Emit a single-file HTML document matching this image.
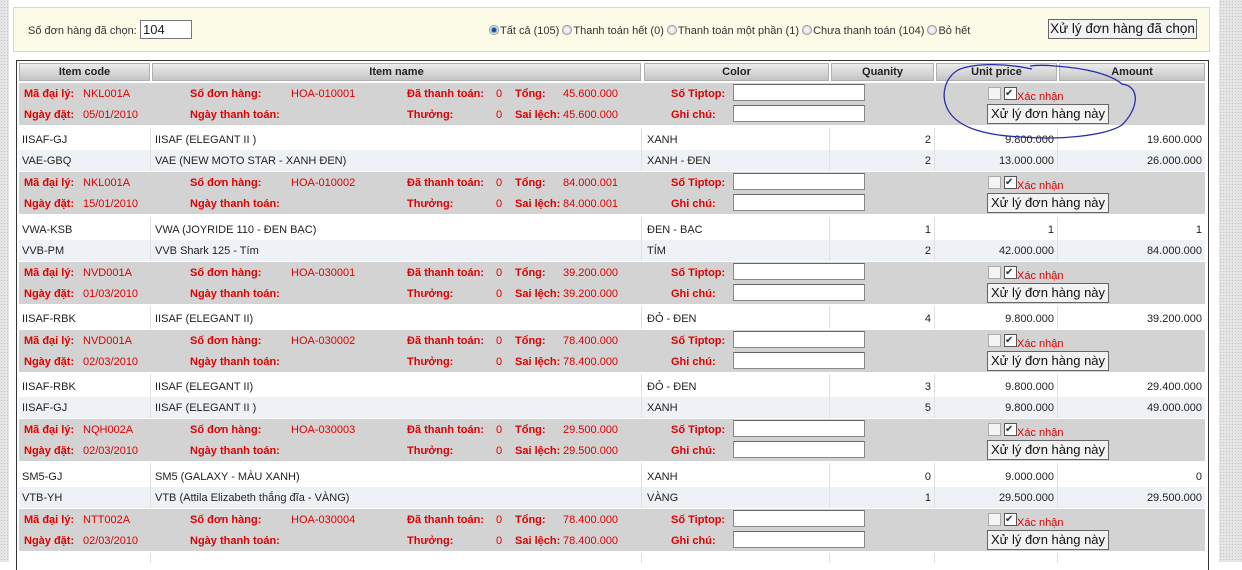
<!DOCTYPE html>
<html><head><meta charset="utf-8"><style>
*{box-sizing:border-box;margin:0;padding:0}
body{width:1242px;height:562px;overflow:hidden;background:#fff;font-family:"Liberation Sans",sans-serif;font-size:11px;color:#222;position:relative}
.a{position:absolute;white-space:nowrap;line-height:14px;margin-top:1px}
.strip{position:absolute;top:0;height:562px;background-color:#e6e6e6;background-image:radial-gradient(#c8c8c8 0.7px,transparent 0.8px);background-size:3px 3px}
.panel{position:absolute;left:13px;top:7px;width:1197px;height:45px;background:#fbfbe8;border:1px solid #d6dbc0}
.tbl{position:absolute;left:16px;top:60px;width:1193px;height:510px;border:1px solid #333;border-bottom:none}
.h{position:absolute;top:63px;height:18px;background:linear-gradient(#ececec,#c4c4c4);border:1px solid #b0b0b0;font-weight:bold;text-align:center;line-height:16px;color:#222}
.blk{position:absolute;left:19px;width:1186px;height:42px;background:#d3d3d3}
.alt{position:absolute;left:19px;width:1186px;height:21px;background:#eef2f6}
.r{color:#e00000}.b{font-weight:bold}
.in{position:absolute;width:132px;height:17px;background:#fff;border:1px solid #888;border-top-color:#666}
.cb{position:absolute;width:13px;height:13px;border:1px solid #aaa;background:#f4f4f4}
.btn{position:absolute;height:20px;border:1px solid #666;background:#f2f2f2;font-size:13px;line-height:18px;text-align:center;white-space:nowrap;color:#111;overflow:hidden}
.vl{position:absolute;width:1px;background:#e0e0e0}
.rad{display:inline-block;width:10px;height:10px;border-radius:50%;border:1px solid #999;background:radial-gradient(#fff,#ccc);vertical-align:-1px;margin-right:1px}
</style></head><body>
<div class="strip" style="left:0;width:9px"></div>
<div class="strip" style="left:1219px;width:23px"></div>
<div class="panel"></div>
<div class="a" style="left:28px;top:23px;color:#333">Số đơn hàng đã chọn:</div>
<div class="a" style="left:140px;top:19px;width:52px;height:19px;border:1px solid #777;background:#fff;font-size:13px;line-height:17px;padding-left:2px">104</div>
<div class="a" style="left:489px;top:23px;color:#333"><span class="rad" style="background:radial-gradient(#0a4a9a 30%,#7aa8d8 45%,#fff 70%)"></span>Tất cả (105) <span class="rad"></span>Thanh toán hết (0) <span class="rad"></span>Thanh toán một phần (1) <span class="rad"></span>Chưa thanh toán (104) <span class="rad"></span>Bỏ hết</div>
<div class="btn" style="left:1048px;top:19px;width:149px;font-size:13.5px">Xử lý đơn hàng đã chọn</div>
<div class="tbl"></div>
<div class="h" style="left:19px;width:131px">Item code</div>
<div class="h" style="left:152px;width:489px">Item name</div>
<div class="h" style="left:644px;width:185px">Color</div>
<div class="h" style="left:831px;width:103px">Quanity</div>
<div class="h" style="left:936px;width:121px">Unit price</div>
<div class="h" style="left:1059px;width:146px">Amount</div>

<div class="alt" style="top:150px"></div><div class="alt" style="top:240px"></div><div class="alt" style="top:397px"></div><div class="alt" style="top:487px"></div>

<div class="blk" style="top:83px"></div><div class="blk" style="top:172px"></div><div class="blk" style="top:262px"></div><div class="blk" style="top:330px"></div><div class="blk" style="top:419px"></div><div class="blk" style="top:509px"></div>

<div class="vl" style="left:150px;top:128px;height:43px"></div><div class="vl" style="left:641px;top:128px;height:43px"></div><div class="vl" style="left:829px;top:128px;height:43px"></div><div class="vl" style="left:934px;top:128px;height:43px"></div><div class="vl" style="left:1057px;top:128px;height:43px"></div>
<div class="vl" style="left:150px;top:217px;height:44px"></div><div class="vl" style="left:641px;top:217px;height:44px"></div><div class="vl" style="left:829px;top:217px;height:44px"></div><div class="vl" style="left:934px;top:217px;height:44px"></div><div class="vl" style="left:1057px;top:217px;height:44px"></div>
<div class="vl" style="left:150px;top:306px;height:23px"></div><div class="vl" style="left:641px;top:306px;height:23px"></div><div class="vl" style="left:829px;top:306px;height:23px"></div><div class="vl" style="left:934px;top:306px;height:23px"></div><div class="vl" style="left:1057px;top:306px;height:23px"></div>
<div class="vl" style="left:150px;top:374px;height:44px"></div><div class="vl" style="left:641px;top:374px;height:44px"></div><div class="vl" style="left:829px;top:374px;height:44px"></div><div class="vl" style="left:934px;top:374px;height:44px"></div><div class="vl" style="left:1057px;top:374px;height:44px"></div>
<div class="vl" style="left:150px;top:463px;height:45px"></div><div class="vl" style="left:641px;top:463px;height:45px"></div><div class="vl" style="left:829px;top:463px;height:45px"></div><div class="vl" style="left:934px;top:463px;height:45px"></div><div class="vl" style="left:1057px;top:463px;height:45px"></div>
<div class="vl" style="left:150px;top:553px;height:10px"></div><div class="vl" style="left:641px;top:553px;height:10px"></div><div class="vl" style="left:829px;top:553px;height:10px"></div><div class="vl" style="left:934px;top:553px;height:10px"></div><div class="vl" style="left:1057px;top:553px;height:10px"></div>

<div class="a r b" style="left:24px;top:86px">Mã đại lý:</div><div class="a r" style="left:83px;top:86px">NKL001A</div><div class="a r b" style="left:190px;top:86px">Số đơn hàng:</div><div class="a r" style="left:291px;top:86px">HOA-010001</div><div class="a r b" style="left:407px;top:86px">Đã thanh toán:</div><div class="a r" style="left:496px;top:86px">0</div><div class="a r b" style="left:515px;top:86px">Tổng:</div><div class="a r" style="left:563px;top:86px">45.600.000</div><div class="a r b" style="left:671px;top:86px">Số Tiptop:</div><div class="in" style="left:733px;top:84px"></div><div class="cb" style="left:988px;top:87px"></div><div class="cb" style="left:1004px;top:87px;border-color:#555;background:#fff;font-size:10px;line-height:11px;color:#235">✔</div><div class="a r" style="left:1017px;top:89px">Xác nhận</div>
<div class="a r b" style="left:24px;top:107px">Ngày đặt:</div><div class="a r" style="left:83px;top:107px">05/01/2010</div><div class="a r b" style="left:190px;top:107px">Ngày thanh toán:</div><div class="a r b" style="left:407px;top:107px">Thưởng:</div><div class="a r" style="left:496px;top:107px">0</div><div class="a r b" style="left:515px;top:107px">Sai lệch:</div><div class="a r" style="left:563px;top:107px">45.600.000</div><div class="a r b" style="left:671px;top:107px">Ghi chú:</div><div class="in" style="left:733px;top:105px"></div><div class="btn" style="left:987px;top:104px;width:122px">Xử lý đơn hàng này</div>

<div class="a r b" style="left:24px;top:175px">Mã đại lý:</div><div class="a r" style="left:83px;top:175px">NKL001A</div><div class="a r b" style="left:190px;top:175px">Số đơn hàng:</div><div class="a r" style="left:291px;top:175px">HOA-010002</div><div class="a r b" style="left:407px;top:175px">Đã thanh toán:</div><div class="a r" style="left:496px;top:175px">0</div><div class="a r b" style="left:515px;top:175px">Tổng:</div><div class="a r" style="left:563px;top:175px">84.000.001</div><div class="a r b" style="left:671px;top:175px">Số Tiptop:</div><div class="in" style="left:733px;top:173px"></div><div class="cb" style="left:988px;top:176px"></div><div class="cb" style="left:1004px;top:176px;border-color:#555;background:#fff;font-size:10px;line-height:11px;color:#235">✔</div><div class="a r" style="left:1017px;top:178px">Xác nhận</div>
<div class="a r b" style="left:24px;top:196px">Ngày đặt:</div><div class="a r" style="left:83px;top:196px">15/01/2010</div><div class="a r b" style="left:190px;top:196px">Ngày thanh toán:</div><div class="a r b" style="left:407px;top:196px">Thưởng:</div><div class="a r" style="left:496px;top:196px">0</div><div class="a r b" style="left:515px;top:196px">Sai lệch:</div><div class="a r" style="left:563px;top:196px">84.000.001</div><div class="a r b" style="left:671px;top:196px">Ghi chú:</div><div class="in" style="left:733px;top:194px"></div><div class="btn" style="left:987px;top:193px;width:122px">Xử lý đơn hàng này</div>

<div class="a r b" style="left:24px;top:265px">Mã đại lý:</div><div class="a r" style="left:83px;top:265px">NVD001A</div><div class="a r b" style="left:190px;top:265px">Số đơn hàng:</div><div class="a r" style="left:291px;top:265px">HOA-030001</div><div class="a r b" style="left:407px;top:265px">Đã thanh toán:</div><div class="a r" style="left:496px;top:265px">0</div><div class="a r b" style="left:515px;top:265px">Tổng:</div><div class="a r" style="left:563px;top:265px">39.200.000</div><div class="a r b" style="left:671px;top:265px">Số Tiptop:</div><div class="in" style="left:733px;top:263px"></div><div class="cb" style="left:988px;top:266px"></div><div class="cb" style="left:1004px;top:266px;border-color:#555;background:#fff;font-size:10px;line-height:11px;color:#235">✔</div><div class="a r" style="left:1017px;top:268px">Xác nhận</div>
<div class="a r b" style="left:24px;top:286px">Ngày đặt:</div><div class="a r" style="left:83px;top:286px">01/03/2010</div><div class="a r b" style="left:190px;top:286px">Ngày thanh toán:</div><div class="a r b" style="left:407px;top:286px">Thưởng:</div><div class="a r" style="left:496px;top:286px">0</div><div class="a r b" style="left:515px;top:286px">Sai lệch:</div><div class="a r" style="left:563px;top:286px">39.200.000</div><div class="a r b" style="left:671px;top:286px">Ghi chú:</div><div class="in" style="left:733px;top:284px"></div><div class="btn" style="left:987px;top:283px;width:122px">Xử lý đơn hàng này</div>

<div class="a r b" style="left:24px;top:333px">Mã đại lý:</div><div class="a r" style="left:83px;top:333px">NVD001A</div><div class="a r b" style="left:190px;top:333px">Số đơn hàng:</div><div class="a r" style="left:291px;top:333px">HOA-030002</div><div class="a r b" style="left:407px;top:333px">Đã thanh toán:</div><div class="a r" style="left:496px;top:333px">0</div><div class="a r b" style="left:515px;top:333px">Tổng:</div><div class="a r" style="left:563px;top:333px">78.400.000</div><div class="a r b" style="left:671px;top:333px">Số Tiptop:</div><div class="in" style="left:733px;top:331px"></div><div class="cb" style="left:988px;top:334px"></div><div class="cb" style="left:1004px;top:334px;border-color:#555;background:#fff;font-size:10px;line-height:11px;color:#235">✔</div><div class="a r" style="left:1017px;top:336px">Xác nhận</div>
<div class="a r b" style="left:24px;top:354px">Ngày đặt:</div><div class="a r" style="left:83px;top:354px">02/03/2010</div><div class="a r b" style="left:190px;top:354px">Ngày thanh toán:</div><div class="a r b" style="left:407px;top:354px">Thưởng:</div><div class="a r" style="left:496px;top:354px">0</div><div class="a r b" style="left:515px;top:354px">Sai lệch:</div><div class="a r" style="left:563px;top:354px">78.400.000</div><div class="a r b" style="left:671px;top:354px">Ghi chú:</div><div class="in" style="left:733px;top:352px"></div><div class="btn" style="left:987px;top:351px;width:122px">Xử lý đơn hàng này</div>

<div class="a r b" style="left:24px;top:422px">Mã đại lý:</div><div class="a r" style="left:83px;top:422px">NQH002A</div><div class="a r b" style="left:190px;top:422px">Số đơn hàng:</div><div class="a r" style="left:291px;top:422px">HOA-030003</div><div class="a r b" style="left:407px;top:422px">Đã thanh toán:</div><div class="a r" style="left:496px;top:422px">0</div><div class="a r b" style="left:515px;top:422px">Tổng:</div><div class="a r" style="left:563px;top:422px">29.500.000</div><div class="a r b" style="left:671px;top:422px">Số Tiptop:</div><div class="in" style="left:733px;top:420px"></div><div class="cb" style="left:988px;top:423px"></div><div class="cb" style="left:1004px;top:423px;border-color:#555;background:#fff;font-size:10px;line-height:11px;color:#235">✔</div><div class="a r" style="left:1017px;top:425px">Xác nhận</div>
<div class="a r b" style="left:24px;top:443px">Ngày đặt:</div><div class="a r" style="left:83px;top:443px">02/03/2010</div><div class="a r b" style="left:190px;top:443px">Ngày thanh toán:</div><div class="a r b" style="left:407px;top:443px">Thưởng:</div><div class="a r" style="left:496px;top:443px">0</div><div class="a r b" style="left:515px;top:443px">Sai lệch:</div><div class="a r" style="left:563px;top:443px">29.500.000</div><div class="a r b" style="left:671px;top:443px">Ghi chú:</div><div class="in" style="left:733px;top:441px"></div><div class="btn" style="left:987px;top:440px;width:122px">Xử lý đơn hàng này</div>

<div class="a r b" style="left:24px;top:512px">Mã đại lý:</div><div class="a r" style="left:83px;top:512px">NTT002A</div><div class="a r b" style="left:190px;top:512px">Số đơn hàng:</div><div class="a r" style="left:291px;top:512px">HOA-030004</div><div class="a r b" style="left:407px;top:512px">Đã thanh toán:</div><div class="a r" style="left:496px;top:512px">0</div><div class="a r b" style="left:515px;top:512px">Tổng:</div><div class="a r" style="left:563px;top:512px">78.400.000</div><div class="a r b" style="left:671px;top:512px">Số Tiptop:</div><div class="in" style="left:733px;top:510px"></div><div class="cb" style="left:988px;top:513px"></div><div class="cb" style="left:1004px;top:513px;border-color:#555;background:#fff;font-size:10px;line-height:11px;color:#235">✔</div><div class="a r" style="left:1017px;top:515px">Xác nhận</div>
<div class="a r b" style="left:24px;top:533px">Ngày đặt:</div><div class="a r" style="left:83px;top:533px">02/03/2010</div><div class="a r b" style="left:190px;top:533px">Ngày thanh toán:</div><div class="a r b" style="left:407px;top:533px">Thưởng:</div><div class="a r" style="left:496px;top:533px">0</div><div class="a r b" style="left:515px;top:533px">Sai lệch:</div><div class="a r" style="left:563px;top:533px">78.400.000</div><div class="a r b" style="left:671px;top:533px">Ghi chú:</div><div class="in" style="left:733px;top:531px"></div><div class="btn" style="left:987px;top:530px;width:122px">Xử lý đơn hàng này</div>

<div class="a" style="left:22px;top:132px">IISAF-GJ</div><div class="a" style="left:155px;top:132px">IISAF (ELEGANT II )</div><div class="a" style="left:647px;top:132px">XANH</div><div class="a" style="right:311px;top:132px">2</div><div class="a" style="right:188px;top:132px">9.800.000</div><div class="a" style="right:40px;top:132px">19.600.000</div>
<div class="a" style="left:22px;top:153px">VAE-GBQ</div><div class="a" style="left:155px;top:153px">VAE (NEW MOTO STAR - XANH ĐEN)</div><div class="a" style="left:647px;top:153px">XANH - ĐEN</div><div class="a" style="right:311px;top:153px">2</div><div class="a" style="right:188px;top:153px">13.000.000</div><div class="a" style="right:40px;top:153px">26.000.000</div>
<div class="a" style="left:22px;top:222px">VWA-KSB</div><div class="a" style="left:155px;top:222px">VWA (JOYRIDE 110 - ĐEN BẠC)</div><div class="a" style="left:647px;top:222px">ĐEN - BẠC</div><div class="a" style="right:311px;top:222px">1</div><div class="a" style="right:188px;top:222px">1</div><div class="a" style="right:40px;top:222px">1</div>
<div class="a" style="left:22px;top:243px">VVB-PM</div><div class="a" style="left:155px;top:243px">VVB Shark 125 - Tím</div><div class="a" style="left:647px;top:243px">TÍM</div><div class="a" style="right:311px;top:243px">2</div><div class="a" style="right:188px;top:243px">42.000.000</div><div class="a" style="right:40px;top:243px">84.000.000</div>
<div class="a" style="left:22px;top:311px">IISAF-RBK</div><div class="a" style="left:155px;top:311px">IISAF (ELEGANT II)</div><div class="a" style="left:647px;top:311px">ĐỎ - ĐEN</div><div class="a" style="right:311px;top:311px">4</div><div class="a" style="right:188px;top:311px">9.800.000</div><div class="a" style="right:40px;top:311px">39.200.000</div>
<div class="a" style="left:22px;top:379px">IISAF-RBK</div><div class="a" style="left:155px;top:379px">IISAF (ELEGANT II)</div><div class="a" style="left:647px;top:379px">ĐỎ - ĐEN</div><div class="a" style="right:311px;top:379px">3</div><div class="a" style="right:188px;top:379px">9.800.000</div><div class="a" style="right:40px;top:379px">29.400.000</div>
<div class="a" style="left:22px;top:400px">IISAF-GJ</div><div class="a" style="left:155px;top:400px">IISAF (ELEGANT II )</div><div class="a" style="left:647px;top:400px">XANH</div><div class="a" style="right:311px;top:400px">5</div><div class="a" style="right:188px;top:400px">9.800.000</div><div class="a" style="right:40px;top:400px">49.000.000</div>
<div class="a" style="left:22px;top:469px">SM5-GJ</div><div class="a" style="left:155px;top:469px">SM5 (GALAXY - MÀU XANH)</div><div class="a" style="left:647px;top:469px">XANH</div><div class="a" style="right:311px;top:469px">0</div><div class="a" style="right:188px;top:469px">9.000.000</div><div class="a" style="right:40px;top:469px">0</div>
<div class="a" style="left:22px;top:490px">VTB-YH</div><div class="a" style="left:155px;top:490px">VTB (Attila Elizabeth thắng đĩa - VÀNG)</div><div class="a" style="left:647px;top:490px">VÀNG</div><div class="a" style="right:311px;top:490px">1</div><div class="a" style="right:188px;top:490px">29.500.000</div><div class="a" style="right:40px;top:490px">29.500.000</div>

<svg style="position:absolute;left:0;top:0" width="1242" height="562"><path d="M1032,69 C1010,64 975,62 958,70 C945,78 940,95 948,110 C958,128 985,135 1020,137 C1060,140 1105,136 1122,125 C1135,112 1138,98 1133,90 C1128,84 1125,85 1122,84 C1110,74 1085,68 1055,66 C1045,65 1038,65 1030,66" fill="none" stroke="#2a2ab0" stroke-width="1.3"/></svg>
</body></html>
